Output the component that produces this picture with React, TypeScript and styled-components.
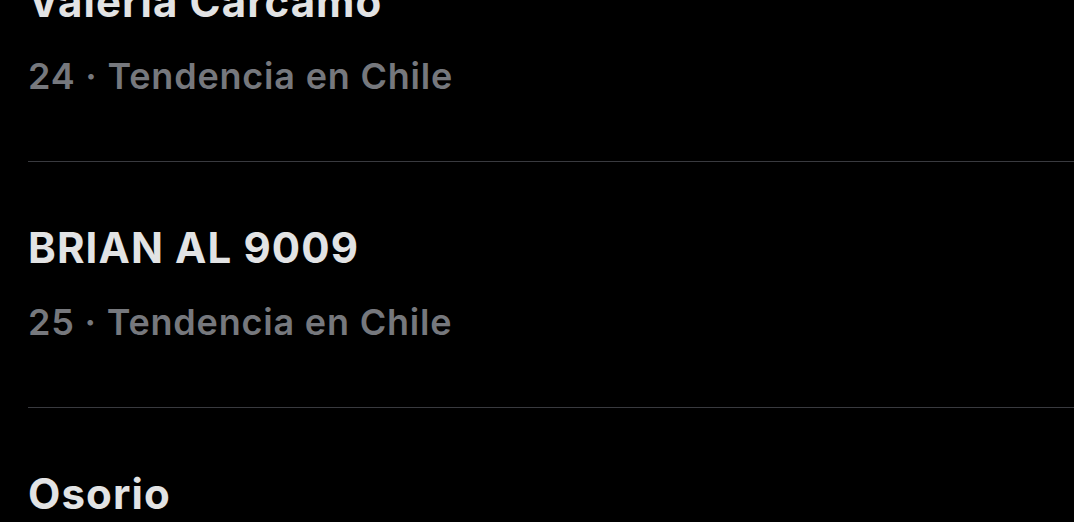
import React from 'react';
import styled, { createGlobalStyle } from 'styled-components';

const GlobalStyle = createGlobalStyle`
  html, body {
    margin: 0;
    padding: 0;
    background: #000000;
    overflow: hidden;
  }
  body {
    font-family: Inter, "Noto Sans", "Liberation Sans", sans-serif;
    -webkit-font-smoothing: antialiased;
  }
`;

const Page = styled.div`
  width: 1074px;
  height: 522px;
  overflow: hidden;
  background: #000000;
`;

const TrendList = styled.ul`
  list-style: none;
  margin: -84px 0 0 28px;
  padding: 0;
`;

const TrendItem = styled.li`
  padding: 61px 0 63px;
  border-bottom: 1px solid #393a3f;
`;

const TrendName = styled.div`
  color: #e2e3e4;
  font-size: 42px;
  line-height: 50px;
  font-weight: 700;
  letter-spacing: 1.1px;
  white-space: nowrap;
`;

const TrendMeta = styled.div`
  margin-top: 27px;
  color: #76787d;
  font-size: 36px;
  line-height: 44px;
  font-weight: 600;
  letter-spacing: 0.8px;
  white-space: nowrap;
`;

const trends = [
  { rank: 24, name: 'Valeria Cárcamo' },
  { rank: 25, name: 'BRIAN AL 9009' },
  { rank: 26, name: 'Osorio' },
];

const App = () => {
  return (
    <>
      <GlobalStyle />
      <Page>
        <TrendList>
          {trends.map((t) => (
            <TrendItem key={t.rank}>
              <TrendName>{t.name}</TrendName>
              <TrendMeta>{t.rank} · Tendencia en Chile</TrendMeta>
            </TrendItem>
          ))}
        </TrendList>
      </Page>
    </>
  );
};

export default App;
